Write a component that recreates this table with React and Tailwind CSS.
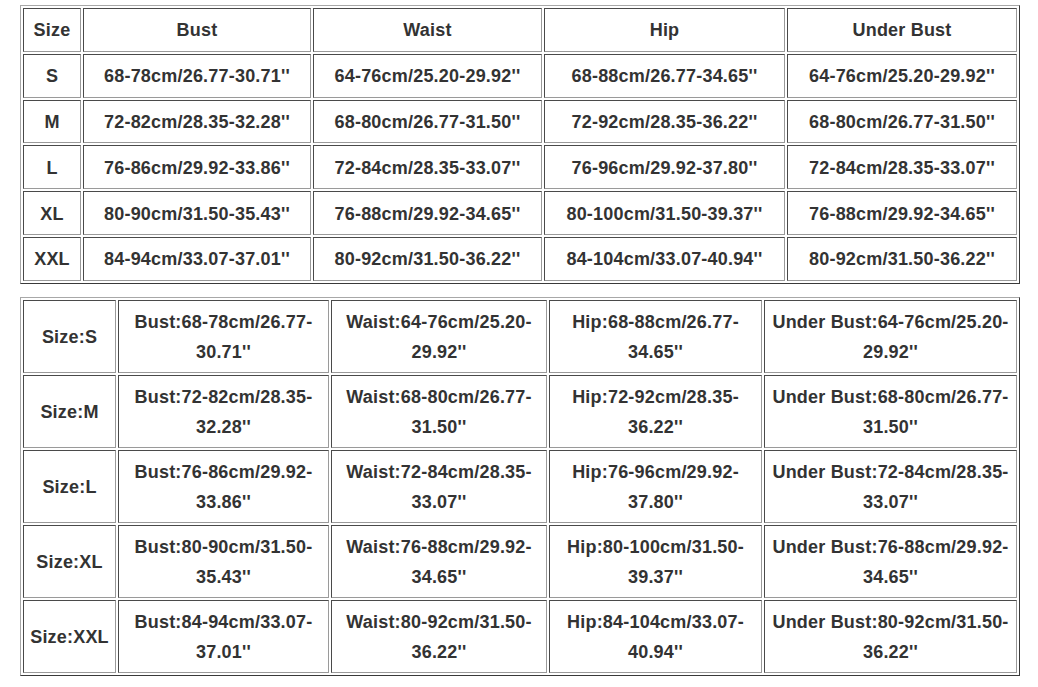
const headers = ['Size', 'Bust', 'Waist', 'Hip', 'Under Bust'];

const rows = [
  ['S', "68-78cm/26.77-30.71''", "64-76cm/25.20-29.92''", "68-88cm/26.77-34.65''", "64-76cm/25.20-29.92''"],
  ['M', "72-82cm/28.35-32.28''", "68-80cm/26.77-31.50''", "72-92cm/28.35-36.22''", "68-80cm/26.77-31.50''"],
  ['L', "76-86cm/29.92-33.86''", "72-84cm/28.35-33.07''", "76-96cm/29.92-37.80''", "72-84cm/28.35-33.07''"],
  ['XL', "80-90cm/31.50-35.43''", "76-88cm/29.92-34.65''", "80-100cm/31.50-39.37''", "76-88cm/29.92-34.65''"],
  ['XXL', "84-94cm/33.07-37.01''", "80-92cm/31.50-36.22''", "84-104cm/33.07-40.94''", "80-92cm/31.50-36.22''"],
];

// split "68-78cm/26.77-30.71''" into the two lines shown in the second table
const splitValue = (v) => {
  const i = v.lastIndexOf('-');
  return [v.slice(0, i + 1), v.slice(i + 1)];
};

const cell =
  'flex flex-col items-center justify-center text-center whitespace-nowrap pt-[2px] border border-t-[#4a4a4a] border-l-[#4a4a4a] border-b-[#9a9a9a] border-r-[#9a9a9a] bg-white';

const table =
  'grid gap-[2px] p-[2px] w-[1000px] border border-t-[#a8a8a8] border-l-[#a8a8a8] border-b-[#3a3a3a] border-r-[#3a3a3a]';

const App = () => {
  const labels = headers.slice(1);

  return (
    <div
      className="min-h-screen bg-white pt-[5px] pl-[20px] text-[18px] font-bold tracking-[0.2px] text-[#333333]"
      style={{ fontFamily: '"Liberation Sans", Arial, sans-serif' }}
    >
      {/* Size chart, one value per cell */}
      <div className={`${table} grid-cols-[58px_228px_229px_241px_230px] auto-rows-[43.8px]`}>
        {headers.map(h => (
          <div key={h} className={cell}>{h}</div>
        ))}
        {rows.map(row =>
          row.map((v, i) => (
            <div key={row[0] + i} className={cell}>{v}</div>
          ))
        )}
      </div>

      {/* Same chart with labels in every cell */}
      <div className={`${table} mt-[13px] grid-cols-[93px_211px_216px_213px_253px] auto-rows-[73px]`}>
        {rows.map(row => (
          <div key={row[0]} className="contents">
            <div className={cell}>Size:{row[0]}</div>
            {row.slice(1).map((v, i) => {
              const [a, b] = splitValue(v);
              return (
                <div key={i} className={`${cell} leading-[30px]`}>
                  <span>{labels[i]}:{a}</span>
                  <span>{b}</span>
                </div>
              );
            })}
          </div>
        ))}
      </div>
    </div>
  );
};

export default App;
